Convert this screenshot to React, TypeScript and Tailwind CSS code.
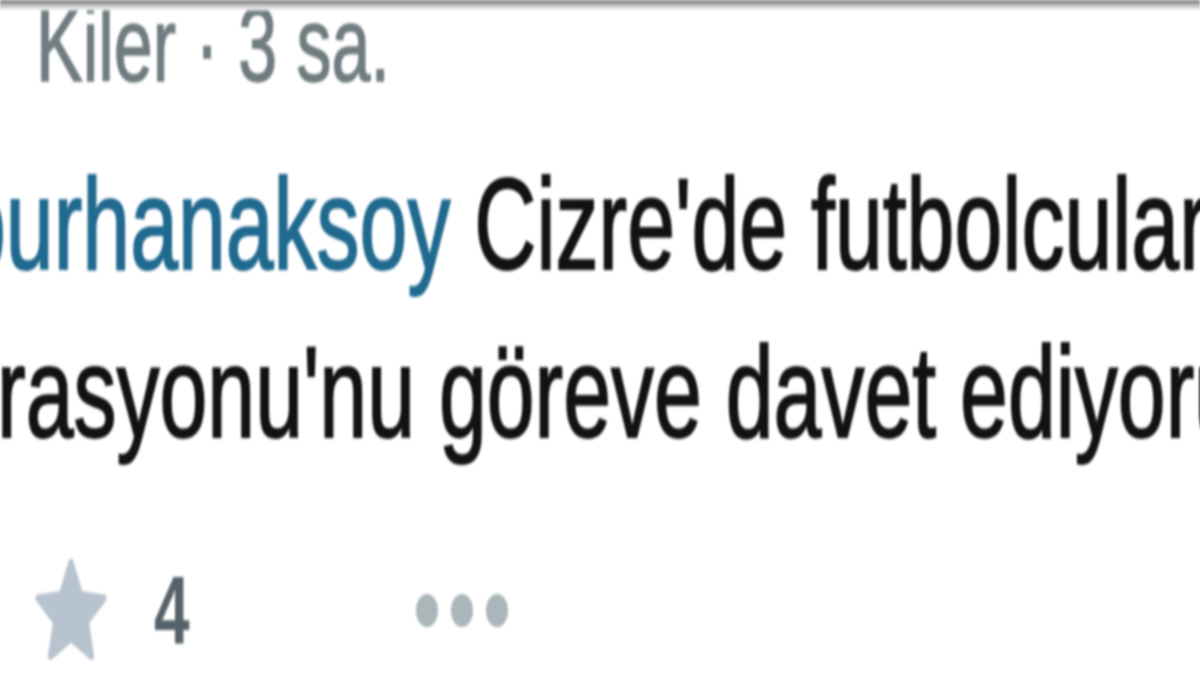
import React from "react";

// Tweet snippet, shown zoomed and stretched vertically (1.5x) like a TV capture
export default function App() {
  return (
    <div className="h-[675px] w-[1200px] overflow-hidden bg-white">
      <div
        className="relative h-[450px] w-[1200px] origin-top scale-y-150 blur-[1px]"
        style={{ fontFamily: '"Liberation Sans", Arial, sans-serif' }}
      >
        {/* top edge shading */}
        <div className="absolute inset-x-0 top-0 h-[7px] bg-gradient-to-b from-[#6f6f6f] via-[#bdbdbd] to-white" />

        {/* Header: name + time */}
        <div className="whitespace-nowrap pl-[36px] text-[70px] leading-[60px] text-[#6f7c80] [-webkit-text-stroke:1px_currentColor]">
          Kiler · 3 sa.
        </div>

        {/* Tweet body */}
        <div className="mt-[33px] whitespace-nowrap text-[86px] leading-[112px] text-[#121212] [-webkit-text-stroke:1.3px_currentColor]">
          <div className="ml-[-42px]">
            <span className="text-[#20698f]">burhanaksoy</span> Cizre'de futbolcular
          </div>
          <div className="ml-[-3px]">rasyonu'nu göreve davet ediyorum</div>
        </div>

        {/* Actions */}
        <div className="mt-[56px] flex h-[68px] items-center">
          <svg
            viewBox="0 0 24 24"
            className="ml-[32px] h-[78px] w-[78px] shrink-0"
            fill="#b7c3ce"
            stroke="#b7c3ce"
            strokeWidth="1.6"
            strokeLinejoin="round"
          >
            <path d="M12 2.2l2.95 6.6 7.15.7-5.4 4.8 1.6 7.05L12 17.7l-6.3 3.65 1.6-7.05-5.4-4.8 7.15-.7z" />
          </svg>
          <span className="ml-[44px] text-[64px] font-bold leading-none text-[#56626a]">4</span>
          <div className="ml-[226px] flex gap-[13px]">
            <span className="h-[22px] w-[22px] rounded-full bg-[#aab6ba]" />
            <span className="h-[22px] w-[22px] rounded-full bg-[#aab6ba]" />
            <span className="h-[22px] w-[22px] rounded-full bg-[#aab6ba]" />
          </div>
        </div>
      </div>
    </div>
  );
}
